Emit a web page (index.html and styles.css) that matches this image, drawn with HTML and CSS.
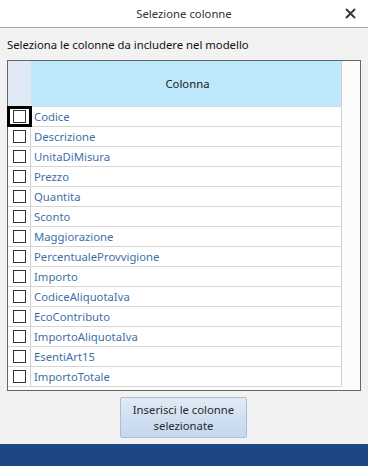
FILE: index.html
```html
<!DOCTYPE html>
<html lang="it">
<head>
<meta charset="utf-8">
<title>Selezione colonne</title>
<link rel="stylesheet" href="styles.css">
</head>
<body>
<div class="window">
  <div class="titlebar">
    <span class="title">Selezione colonne</span>
    <span class="close">
      <svg width="11" height="11" viewBox="0 0 11 11"><path d="M1 1L10 10M10 1L1 10" stroke="#3a3a3a" stroke-width="2"/></svg>
    </span>
  </div>
  <div class="content">
    <div class="intro">Seleziona le colonne da includere nel modello</div>
    <div class="grid">
      <div class="table">
        <div class="row head">
          <div class="rh"></div>
          <div class="cell">Colonna</div>
        </div>
        <div class="row"><div class="rh focus"><span class="cb"></span></div><div class="cell">Codice</div></div>
        <div class="row"><div class="rh"><span class="cb"></span></div><div class="cell">Descrizione</div></div>
        <div class="row"><div class="rh"><span class="cb"></span></div><div class="cell">UnitaDiMisura</div></div>
        <div class="row"><div class="rh"><span class="cb"></span></div><div class="cell">Prezzo</div></div>
        <div class="row"><div class="rh"><span class="cb"></span></div><div class="cell">Quantita</div></div>
        <div class="row"><div class="rh"><span class="cb"></span></div><div class="cell">Sconto</div></div>
        <div class="row"><div class="rh"><span class="cb"></span></div><div class="cell">Maggiorazione</div></div>
        <div class="row"><div class="rh"><span class="cb"></span></div><div class="cell">PercentualeProvvigione</div></div>
        <div class="row"><div class="rh"><span class="cb"></span></div><div class="cell">Importo</div></div>
        <div class="row"><div class="rh"><span class="cb"></span></div><div class="cell">CodiceAliquotaIva</div></div>
        <div class="row"><div class="rh"><span class="cb"></span></div><div class="cell">EcoContributo</div></div>
        <div class="row"><div class="rh"><span class="cb"></span></div><div class="cell">ImportoAliquotaIva</div></div>
        <div class="row"><div class="rh"><span class="cb"></span></div><div class="cell">EsentiArt15</div></div>
        <div class="row"><div class="rh"><span class="cb"></span></div><div class="cell">ImportoTotale</div></div>
      </div>
    </div>
    <div class="actions">
      <button class="btn">Inserisci le colonne<br>selezionate</button>
    </div>
  </div>
  <div class="footer"></div>
</div>
</body>
</html>
```

FILE: styles.css
```css
html, body {
  margin: 0;
  padding: 0;
}
body {
  width: 368px;
  height: 466px;
  overflow: hidden;
  background: #f2f2f2;
  font-family: "Noto Sans", "Open Sans", sans-serif;
  font-size: 11.3px;
  color: #1e1e1e;
}
.window {
  display: flex;
  flex-direction: column;
  height: 466px;
}
.titlebar {
  height: 27px;
  background: #ffffff;
  border-bottom: 1px solid #a6a6a6;
  display: flex;
  align-items: center;
  justify-content: center;
  position: relative;
  flex: none;
}
.title {
  color: #333;
}
.close {
  position: absolute;
  right: 12px;
  top: 8px;
  width: 11px;
  height: 11px;
  display: flex;
}
.content {
  flex: 1;
  display: flex;
  flex-direction: column;
  padding: 0 7px;
}
.intro {
  height: 32px;
  line-height: 33px;
  color: #111;
}
.grid {
  height: 329px;
  border: 1px solid #666;
  background: #fcfcfc;
  width: 352px;
}
.table {
  width: 334px;
  background: #fff;
}
.row {
  display: flex;
  height: 20px;
  border-bottom: 1px solid #d6d6d6;
  box-sizing: border-box;
}
.row.head {
  height: 46px;
}
.row.head .rh {
  background: #dfeaf4;
  border-right: none;
}
.row.head .cell {
  background: #bde7fb;
  color: #1a1a1a;
  justify-content: center;
}
.rh {
  width: 23px;
  flex: none;
  border-right: 1px solid #d0d0d0;
  display: flex;
  align-items: center;
  justify-content: center;
  box-sizing: border-box;
  background: #fff;
}
.rh.focus {
  outline: 3px solid #000;
  outline-offset: -2px;
}
.cb {
  width: 11px;
  height: 11px;
  border: 1px solid #333;
  background: #fff;
  margin-left: 1px;
}
.cell {
  flex: 1;
  display: flex;
  align-items: center;
  padding-left: 3px;
  color: #3f6fa8;
  border-right: 1px solid #d0d0d0;
}
.actions {
  display: flex;
  justify-content: center;
  padding-top: 6px;
}
.btn {
  width: 127px;
  height: 41px;
  margin-left: -1px;
  border: 1px solid #a9bfd7;
  border-radius: 2px;
  background: linear-gradient(#e2ebf5, #d0e0f1 50%, #c4d8ee);
  font-family: "Noto Sans", "Open Sans", sans-serif;
  font-size: 11.3px;
  color: #2a2a2a;
  line-height: 16px;
  padding: 0;
}
.footer {
  height: 22px;
  background: #1c4684;
  flex: none;
}
```
